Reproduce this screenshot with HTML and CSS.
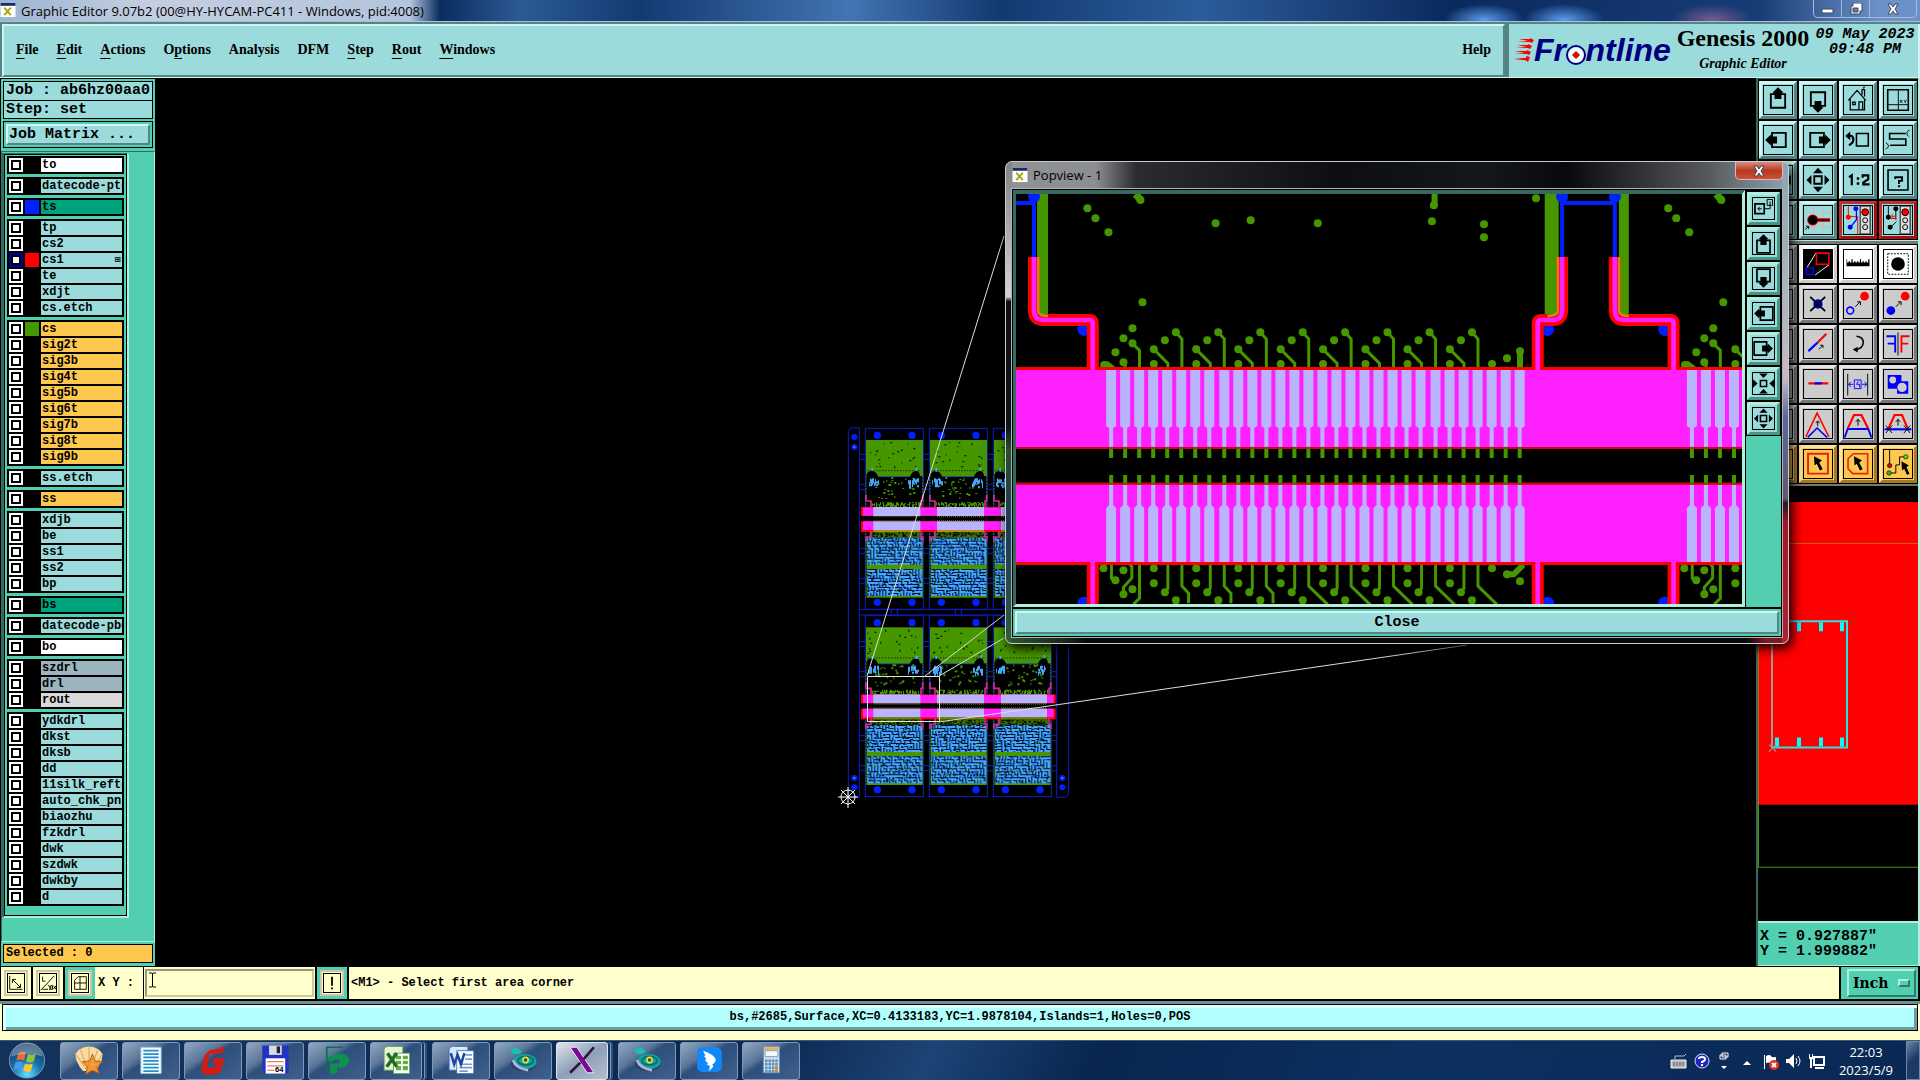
FILE: index.html
```
<!DOCTYPE html>
<html lang="en">
<head>
    <meta charset="UTF-8">
    <meta name="viewport" content="width=device-width, initial-scale=1.0">
    <title>Graphic Editor 9.07b2</title>
    <link rel="stylesheet" href="styles.css">
</head>
<body>
    <!-- shared icons -->
    <svg class="defs" aria-hidden="true">
        <symbol id="pan" viewBox="0 0 90 90">
            <path d="M36 26H22V70H68V26H54" fill="none" stroke="#000" stroke-width="6"/>
            <path d="M45 4 63 22H56V42H34V22H27Z"/>
        </symbol>
        <symbol id="zoom-out" viewBox="0 0 90 90">
            <path d="M33 33H57V57H33Z" fill="none" stroke="#000" stroke-width="6"/>
            <path d="M45 6 61 23H29ZM45 84 61 67H29ZM8 45 24 29V61ZM82 45 66 29V61Z"/>
        </symbol>
        <symbol id="zoom-in" viewBox="0 0 90 90">
            <path d="M33 33H57V57H33Z" fill="none" stroke="#000" stroke-width="6"/>
            <path d="M45 24 62 6H28ZM45 66 62 84H28ZM22 45 4 28V62ZM68 45 86 28V62Z"/>
        </symbol>
        <symbol id="x-app" viewBox="0 0 16 16">
            <path fill="#fff" d="M0 0h16v15H0z"/>
            <path fill="#1c2a70" d="M0 0h16v3H0z"/>
            <path fill="none" stroke="#a8a800" stroke-width="2" d="M4 5l7 8M11 5l-7 8"/>
        </symbol>
        <symbol id="genesis" viewBox="0 0 40 40">
            <ellipse cx="21" cy="24" rx="15" ry="9" fill="#2c3c66"/>
            <ellipse cx="22" cy="22" rx="14" ry="9" fill="#12a39a"/>
            <path d="M8 20q4 10 18 12" fill="none" stroke="#b9b2d8" stroke-width="3"/>
            <ellipse cx="23" cy="21" rx="9" ry="5" fill="none" stroke="#0a6a6c" stroke-width="2"/>
            <circle cx="23" cy="20" r="4" fill="#e6dc3c"/>
            <circle cx="23" cy="20" r="2" fill="#14524e"/>
            <path d="M5 9q2-4 8-3l6 4-4 3H8z" fill="#16c0b4"/>
        </symbol>
    </svg>

    <header class="titlebar">
        <svg class="app-icon"><use href="#x-app"/></svg>
        <span class="titlebar-text">Graphic Editor 9.07b2 (00@HY-HYCAM-PC411 - Windows, pid:4008)</span>
        <div class="window-buttons">
            <button aria-label="Minimize"><svg viewBox="0 0 14 12"><path d="M1 6h11v4H1z"/></svg></button>
            <button aria-label="Restore"><svg viewBox="0 0 14 12"><path fill-rule="evenodd" d="M4 0h9v8h-2v3H2V3h2zM4 5v4h5V5z"/></svg></button>
            <button aria-label="Close window" class="wide"><svg viewBox="0 0 14 12"><path d="M2 1h3l2 3 2-3h3L9 6l3 5H9L7 8l-2 3H2l3-5z"/></svg></button>
        </div>
    </header>

    <div class="topbar">
        <nav class="menubar">
            <a href="#"><u>F</u>ile</a>
            <a href="#"><u>E</u>dit</a>
            <a href="#"><u>A</u>ctions</a>
            <a href="#">O<u>p</u>tions</a>
            <a href="#">Analysis</a>
            <a href="#">DFM</a>
            <a href="#"><u>S</u>tep</a>
            <a href="#"><u>R</u>out</a>
            <a href="#"><u>W</u>indows</a>
            <a href="#" class="help">Help</a>
        </nav>
        <div class="brand">
            <div class="logo">
                <svg class="flames" viewBox="0 0 20 24"><path fill="#f00" d="M5 1h11V0l4 2-2 3-2-1H3l11-1zM3 7h11V6l4 2-2 3-2-1H1l12-1zM1 13h12v-1l4 2-2 3-2-1H0l11-1zM0 20h12v-2l4 1-2 5-3-2H0l9-1z"/></svg>
                <span class="logo-text">Fr<span class="logo-o">o<svg viewBox="0 0 20 26"><circle cx="10" cy="13" r="9" fill="#e8ffff" stroke="#000080" stroke-width="2"/><path fill="#e00" d="M10 9l4 4-4 4-4-4z"/></svg></span>ntline</span>
            </div>
            <div class="product">
                <div class="product-name">Genesis 2000</div>
                <div class="product-sub">Graphic Editor</div>
            </div>
            <div class="datetime"><div>09 May 2023</div><div>09:48 PM</div></div>
        </div>
    </div>

    <main class="workspace">
        <aside class="sidebar">
            <div class="job-info">
                <div class="job-line">Job : ab6hz00aa0</div>
                <div class="job-line">Step: set</div>
            </div>
            <div class="matrix-box"><button class="matrix">Job Matrix ...</button></div>
            <div class="layer-scroll">
                <div class="layers" id="layers"></div>
            </div>
            <div class="selected-box"><div class="selected">Selected : 0</div></div>
        </aside>

        <section class="canvas">
            <svg id="board" viewBox="155 78 1601 888" preserveAspectRatio="xMinYMin meet"></svg>
        </section>

        <aside class="right">
            <div class="tools">
                <button class="tool" aria-label="Pan up"><svg viewBox="0 0 90 90"><use href="#pan"/></svg></button>
                <button class="tool" aria-label="Pan down"><svg viewBox="0 0 90 90"><use href="#pan" transform="rotate(180 45 45)"/></svg></button>
                <button class="tool" aria-label="Home"><svg viewBox="0 0 90 90"><path d="M14 46 42 14 70 46M20 42V77H66V42M48 77V51H60V77M28 52H36V60H28ZM58 28V12H66V34M62 8l4-6" fill="none" stroke="#000" stroke-width="4"/></svg></button>
                <button class="tool" aria-label="XY window"><svg viewBox="0 0 90 90"><path d="M12 12H78V78H12Z" fill="none" stroke="#000" stroke-width="5"/><path d="M46 12V78M12 60H78M51 45l8 9M59 45l-8 9M64 45l4 5 5-5M68 50v5" fill="none" stroke="#000" stroke-width="3"/></svg></button>

                <button class="tool" aria-label="Pan left"><svg viewBox="0 0 90 90"><use href="#pan" transform="rotate(-90 45 45)"/></svg></button>
                <button class="tool" aria-label="Pan right"><svg viewBox="0 0 90 90"><use href="#pan" transform="rotate(90 45 45)"/></svg></button>
                <button class="tool" aria-label="Previous view"><svg viewBox="0 0 90 90"><path d="M40 24H78V64H40Z" fill="none" stroke="#000" stroke-width="5"/><path d="M14 32H24Q30 34 30 44T16 62" fill="none" stroke="#000" stroke-width="7"/><path d="M4 32 20 18V46Z"/></svg></button>
                <button class="tool" aria-label="Serpentine"><svg viewBox="0 0 90 90"><path d="M70 24H18V42H70V62H20" fill="none" stroke="#000" stroke-width="5"/><path d="M82 12l-8 8v8l6 6M6 54l8 7v6l-8 8" fill="none" stroke="#000" stroke-width="3"/></svg></button>

                <button class="tool" aria-label="Zoom in"><svg viewBox="0 0 90 90"><use href="#zoom-in"/></svg></button>
                <button class="tool" aria-label="Zoom out"><svg viewBox="0 0 90 90"><use href="#zoom-out"/></svg></button>
                <button class="tool" aria-label="Scale 1:2"><svg viewBox="0 0 90 90"><path d="M16 36l9-6V62M60 38V30H78V42L62 53V59H82" fill="none" stroke="#000" stroke-width="7"/><path d="M41 36h8v8h-8zM41 52h8v8h-8z"/></svg></button>
                <button class="tool" aria-label="Query"><svg viewBox="0 0 90 90"><path d="M13 13H77V77H13Z" fill="none" stroke="#000" stroke-width="5"/><path d="M36 42V36H58V48H48V58" fill="none" stroke="#000" stroke-width="6"/><path d="M45 62h7v6h-7z"/></svg></button>

                <button class="tool" aria-label="Measure"><svg viewBox="0 0 90 90"><path d="M15 20H70V70" fill="none" stroke="#000" stroke-width="3"/></svg></button>
                <button class="tool" aria-label="Snap"><svg viewBox="0 0 90 90"><path d="M32 0V90M62 0V90M0 22H90M0 68H90" stroke="#e6a8a0" stroke-width="2"/><path d="M28 45H84" stroke="#f00" stroke-width="12"/><circle cx="28" cy="45" r="18" fill="#f00"/><circle cx="28" cy="45" r="15"/><path d="M28 45H82" stroke="#000" stroke-width="5"/><path d="M4 76 14 66M6 65h9v9" fill="none" stroke="#000" stroke-width="3"/></svg></button>
                <button class="tool alert" aria-label="Net check"><svg viewBox="0 0 90 90"><path d="M14 0V34H44V90" fill="none" stroke="#f00" stroke-width="3"/><path d="M40 8V44L22 66" fill="none" stroke="#00f" stroke-width="4"/><circle cx="14" cy="36" r="8" fill="#f00"/><circle cx="38" cy="9" r="8" fill="#00f"/><circle cx="20" cy="68" r="8" fill="#00f"/><path d="M52 0V90H84V0Z" fill="#ddd" stroke="#000" stroke-width="3"/><circle cx="68" cy="20" r="11" fill="#f00" stroke="#000" stroke-width="3"/><circle cx="68" cy="46" r="8" fill="none" stroke="#000" stroke-width="3"/><circle cx="68" cy="68" r="8" fill="none" stroke="#000" stroke-width="3"/></svg></button>
                <button class="tool alert" aria-label="Spacing check"><svg viewBox="0 0 90 90"><path d="M14 0V36M38 8V44M22 68L40 50" fill="none" stroke="#000" stroke-width="3"/><path d="M26 26V40H38M26 33H38M20 40H40" fill="none" stroke="#f00" stroke-width="3"/><circle cx="14" cy="36" r="8"/><circle cx="38" cy="9" r="8"/><circle cx="20" cy="68" r="8"/><path d="M52 0V90H84V0Z" fill="#ddd" stroke="#000" stroke-width="3"/><circle cx="68" cy="20" r="11" fill="#f00" stroke="#000" stroke-width="3"/><circle cx="68" cy="46" r="8" fill="none" stroke="#000" stroke-width="3"/><circle cx="68" cy="68" r="8" fill="none" stroke="#000" stroke-width="3"/></svg></button>
            </div>

            <div class="tools edit">
                <button class="tool grey" aria-label="Select"><svg viewBox="0 0 90 90"></svg></button>
                <button class="tool white" aria-label="Popview"><svg viewBox="0 0 90 90"><path d="M0 0H90V90H0Z"/><path d="M10 56 38 10M36 80 80 48" stroke="#fff" stroke-width="3"/><path d="M40 10H80V46H40Z" fill="none" stroke="#f00" stroke-width="5"/><path d="M8 58H30V78H8Z" fill="none" stroke="#00f" stroke-width="5"/></svg></button>
                <button class="tool white" aria-label="Ruler"><svg viewBox="0 0 90 90"><path d="M8 30V52H82V30h-4v10h-5V36h-4v4h-5V36h-4v4h-5V30h-4v10h-5V36h-4v4h-5V36h-4v4h-5V30h-4v10h-5V36h-4v4h-5V30z"/></svg></button>
                <button class="tool white" aria-label="Flash"><svg viewBox="0 0 90 90"><path d="M12 12H78V78H12Z" fill="none" stroke="#000" stroke-width="3" stroke-dasharray="6 4"/><circle cx="45" cy="45" r="22"/></svg></button>

                <button class="tool grey" aria-label="Add"><svg viewBox="0 0 90 90"></svg></button>
                <button class="tool grey" aria-label="Delete"><svg viewBox="0 0 90 90"><circle cx="45" cy="45" r="15" fill="#0000c8"/><path d="M20 22 68 68M68 22 20 68" stroke="#000" stroke-width="6"/></svg></button>
                <button class="tool grey" aria-label="Copy pad"><svg viewBox="0 0 90 90"><circle cx="66" cy="20" r="14" fill="#f00"/><circle cx="20" cy="66" r="11" fill="none" stroke="#00f" stroke-width="5"/><path d="M36 54 52 38M42 38H53V49" fill="none" stroke="#000" stroke-width="3"/></svg></button>
                <button class="tool grey" aria-label="Move pad"><svg viewBox="0 0 90 90"><circle cx="68" cy="20" r="14" fill="#f00"/><circle cx="22" cy="66" r="14" fill="#00f"/><path d="M38 54 54 38M44 38H55V49" fill="none" stroke="#000" stroke-width="3"/></svg></button>

                <button class="tool grey" aria-label="Line"><svg viewBox="0 0 90 90"></svg></button>
                <button class="tool grey" aria-label="Stretch line"><svg viewBox="0 0 90 90"><path d="M44 40 72 12" stroke="#f00" stroke-width="7"/><path d="M14 68 44 40" stroke="#00f" stroke-width="7"/><path d="M48 62 60 50M52 49H61V58" fill="none" stroke="#000" stroke-width="3"/></svg></button>
                <button class="tool grey" aria-label="Rotate"><svg viewBox="0 0 90 90"><path d="M40 20Q62 22 62 40T36 64" fill="none" stroke="#000" stroke-width="5"/><path d="M28 63 44 54V72Z"/></svg></button>
                <button class="tool grey" aria-label="Mirror"><svg viewBox="0 0 90 90"><path d="M45 8V82" stroke="#000" stroke-width="3"/><path d="M8 20H36V72M12 44H36" fill="none" stroke="#00f" stroke-width="6"/><path d="M82 20H56V72M56 44H78" fill="none" stroke="#f00" stroke-width="6"/></svg></button>

                <button class="tool grey" aria-label="Arc"><svg viewBox="0 0 90 90"></svg></button>
                <button class="tool grey" aria-label="Break line"><svg viewBox="0 0 90 90"><path d="M14 43H78" stroke="#f00" stroke-width="7"/><path d="M34 43H58" stroke="#00f" stroke-width="7"/></svg></button>
                <button class="tool grey" aria-label="Spacing"><svg viewBox="0 0 90 90"><path d="M12 12V82M76 12V82" stroke="#000" stroke-width="3"/><path d="M14 46H30M58 46H74M22 38l-7 8 7 8M66 38l7 8-7 8M33 32H55V60H33ZM46 36l-6 10H50V56" fill="none" stroke="#00f" stroke-width="3"/></svg></button>
                <button class="tool grey" aria-label="Contour"><svg viewBox="0 0 90 90"><path d="M12 16H56V36H78V76H42V60H12Z" fill="#00f"/><circle cx="28" cy="32" r="11" fill="#ccc"/><circle cx="58" cy="56" r="15" fill="#ccc"/></svg></button>

                <button class="tool grey" aria-label="Corner"><svg viewBox="0 0 90 90"></svg></button>
                <button class="tool grey" aria-label="Move corner"><svg viewBox="0 0 90 90"><path d="M6 86 42 10 80 86" fill="none" stroke="#f00" stroke-width="5"/><path d="M12 88 42 58 74 88" fill="none" stroke="#00f" stroke-width="5"/><path d="M44 52V36M38 42l6-7 6 7" fill="none" stroke="#000" stroke-width="3"/></svg></button>
                <button class="tool grey" aria-label="Move segment"><svg viewBox="0 0 90 90"><path d="M12 60 32 16H56L78 60" fill="none" stroke="#f00" stroke-width="7"/><path d="M2 88 12 61H78L88 88" fill="none" stroke="#00f" stroke-width="6"/><path d="M45 50V30M38 38l7-8 7 8" fill="none" stroke="#000" stroke-width="3"/></svg></button>
                <button class="tool grey" aria-label="Slide segment"><svg viewBox="0 0 90 90"><path d="M14 60 34 16H58L76 60" fill="none" stroke="#f00" stroke-width="7"/><path d="M2 62H88" stroke="#00f" stroke-width="7"/><path d="M45 50V30M38 38l7-8 7 8M6 50 26 74M26 50 6 74M64 50 84 74M84 50 64 74" fill="none" stroke="#000" stroke-width="3"/></svg></button>

                <button class="tool gold" aria-label="Select one"><svg viewBox="0 0 90 90"></svg></button>
                <button class="tool gold" aria-label="Select rectangle"><svg viewBox="0 0 90 90"><path d="M13 12H77V76H13Z" fill="none" stroke="#e82010" stroke-width="6"/><path d="M32 20 58 34 49 40 60 62 51 66 41 44 34 50Z"/></svg></button>
                <button class="tool gold" aria-label="Select polygon"><svg viewBox="0 0 90 90"><path d="M30 12H76V76H28L13 60V28Z" fill="none" stroke="#e82010" stroke-width="5"/><path d="M32 20 58 34 49 40 60 62 51 66 41 44 34 50Z"/></svg></button>
                <button class="tool gold" aria-label="Select net"><svg viewBox="0 0 90 90"><path d="M18 0V50M18 74H38V48H50V22H70" fill="none" stroke="#000" stroke-width="3"/><circle cx="18" cy="50" r="7" fill="#c01010" stroke="#000" stroke-width="2"/><circle cx="16" cy="74" r="7" fill="#20c020" stroke="#000" stroke-width="2"/><circle cx="70" cy="22" r="7" fill="#50e020" stroke="#000" stroke-width="2"/><path d="M56 36 80 50 72 55 82 76 74 80 65 60 58 66Z"/></svg></button>
            </div>

            <div class="overview">
                <svg viewBox="1758 502 160 418" preserveAspectRatio="none">
                    <path fill="#f00" d="M1758 502h160v302h-160z"/>
                    <path stroke="#c86410" d="M1758 543.5h160M1758.5 543v261" fill="none"/>
                    <path stroke="#469600" d="M1758.5 804v62.500h160" fill="none"/>
                    <path stroke="#9a9a9a" stroke-width="2" d="M1772 621v126"/>
                    <path stroke="#2ce0e4" stroke-width="2" fill="none" d="M1773 621h74v126h-74"/>
                    <path stroke="#0ff" stroke-width="4" d="M1777 622v9M1799 622v9M1821 622v9M1842 622v9M1777 737v9M1799 737v9M1821 737v9M1842 737v9"/>
                    <path stroke="#9a9a9a" d="M1769 744l7 7M1776 744l-7 7"/>
                </svg>
            </div>
            <div class="coords"><div>X = 0.927887"</div><div>Y = 1.999882"</div></div>
        </aside>
    </main>

    <div class="command">
        <button class="cmd" aria-label="Absolute mode"><svg viewBox="0 0 20 20"><path d="M3 2v15h14M6 6l9 9M6 10V6h4M15 11v4h-4"/></svg></button>
        <button class="cmd" aria-label="Angle mode"><svg viewBox="0 0 20 20"><path d="M2 18 17 2M4 3v5h3M4 17h6M10 12q3 2 2 6M13 13v4h2v-4zM16 13l3 4M19 13l-3 4"/></svg></button>
        <button class="cmd on" aria-label="Grid"><svg viewBox="0 0 20 20"><path d="M4 17V7l4-4h9v14zM10 3v14M4 10h13"/></svg></button>
        <label class="xy" for="xy">X Y :</label>
        <div class="xy-field">
            <input type="text" id="xy">
            <svg class="ibeam" viewBox="0 0 7 16"><path d="M0 1h3M4 1h3M3.500 1v14M0 15h3M4 15h3" stroke="#000"/></svg>
        </div>
        <button class="cmd on" aria-label="Interrupt"><svg viewBox="0 0 20 20"><path d="M10 3v10M10 15v2" stroke-width="2"/></svg></button>
        <div class="prompt">&lt;M1&gt; - Select first area corner</div>
        <div class="units">
            <select aria-label="Units"><option>Inch</option><option>MM</option></select>
            <span class="units-mark"></span>
        </div>
    </div>

    <div class="status"><div class="status-text">bs,#2685,Surface,XC=0.4133183,YC=1.9878104,Islands=1,Holes=0,POS</div></div>

    <footer class="taskbar">
        <button class="start" aria-label="Start">
            <svg viewBox="0 0 40 40">
                <defs><radialGradient id="orb" cx=".5" cy=".9" r=".9"><stop offset="0" stop-color="#5fe4ff"/><stop offset=".45" stop-color="#1a72b4"/><stop offset="1" stop-color="#17304e"/></radialGradient></defs>
                <circle cx="20" cy="20" r="18" fill="url(#orb)" stroke="#7d9cba"/>
                <path fill="#f2682c" d="M11 13q4-3 8-1l-2 8q-4-2-8 0z"/><path fill="#8cc63e" d="M21 13q4 2 8 0l-2 8q-4 2-8 0z"/>
                <path fill="#3c9ee8" d="M8 22q4-2 8 0l-2 8q-3-2-8 0z"/><path fill="#fbc834" d="M18 23q4 2 8 0l-2 8q-4 2-8-1z"/>
                <path fill="#fff" opacity=".3" d="M4 16a16 14 0 0 1 32 0q-16-6-32 0z"/>
            </svg>
        </button>
        <button class="task" aria-label="Shell"><svg viewBox="0 0 40 40"><path fill="#f8dca4" d="M13 33 9 28 5 20l-1-7 4-5 6-3 6-1 6 1 6 3 4 5-1 7-4 8-4 5z"/><path stroke="#d39a3e" fill="none" d="M18 33 5 14M19 33 10 8M20 33V5M22 33l8-25M24 33l11-19"/><path fill="#f09030" stroke="#b35a10" d="M24 13l3 8 9 1-7 6 3 8-8-4-8 5 2-9-6-6 9-1z"/><path fill="none" stroke="#ffd080" stroke-dasharray="1 2" d="M24 17v14M18 25h13M20 32l4-7 5 6"/></svg></button>
        <button class="task" aria-label="Notes"><svg viewBox="0 0 40 40"><path fill="#f4fbff" stroke="#8cb8d8" d="M8 5h24v31H8z"/><path stroke="#2590c8" stroke-width="2" d="M11 9h18M11 13h18M11 17h18M11 21h18M11 25h18M11 29h18M11 33h18"/></svg></button>
        <button class="task" aria-label="G tool"><svg viewBox="0 0 40 40"><path fill="#d41c12" d="M34 3 31 12 16 13 13 29h9l2-5h-5l2-6h12l-3 14-6 5H9l-3-5 4-18 7-6 10-1z"/></svg></button>
        <button class="task" aria-label="Save 64"><svg viewBox="0 0 40 40"><path fill="#2334c4" d="M5 3h31v33H8l-3-3z"/><path fill="#d8dce4" d="M13 3h15v11H13z"/><path fill="#223" d="M22 4h4v8h-4z"/><path fill="#fff" d="M9 18h23v18H9z"/><path stroke="#d43a3a" d="M11 22h19M11 27h19M11 32h8"/><text x="20" y="34" class="disk">64</text></svg></button>
        <button class="task" aria-label="P tool"><svg viewBox="0 0 40 40"><path fill="#0d9050" d="M11 16q12-6 20-2 7 7-1 14-5 3-10 0v8h-8V24h9q4-1 2-4-5-2-12 4z"/><path fill="none" stroke="#0d7050" stroke-width="2" d="M8 35V5h19"/></svg></button>
        <button class="task stacked" aria-label="Spreadsheet"><svg viewBox="0 0 40 40"><path fill="#e4f4d4" stroke="#58a040" d="M6 7q2-4 8-3h14v28H6z"/><path fill="#fff" stroke="#58a040" d="M17 12h19v24H17z"/><path fill="#66aa4a" d="M20 15h6v4h-6zM28 15h6v4h-6zM20 21h6v4h-6zM28 21h6v4h-6zM20 27h6v5h-6zM28 27h6v5h-6z"/><path stroke="#1e6c20" stroke-width="4" d="M10 12 21 28M21 12 9 28"/></svg></button>
        <button class="task" aria-label="Document"><svg viewBox="0 0 40 40"><path fill="#dbe8f8" stroke="#3c6cb8" d="M6 7q2-4 8-3h14v28H6z"/><path fill="#fff" stroke="#3c6cb8" d="M15 9h20v27H15z"/><path stroke="#7a9cd0" stroke-width="2" d="M25 14h8M25 19h8M18 25h15M18 29h15M18 33h10"/><path fill="none" stroke="#1c489c" stroke-width="3" d="M8 12l4 13 4-11 4 11 4-13"/></svg></button>
        <button class="task" aria-label="Genesis"><svg><use href="#genesis"/></svg></button>
        <button class="task active stacked" aria-label="X server"><svg viewBox="0 0 40 40"><path fill="#7a0a90" stroke="#fff" d="M6 5h8l20 30h-8z"/><path stroke="#301040" stroke-width="3" d="M34 5 22 19M18 23 6 35"/></svg></button>
        <button class="task" aria-label="Genesis 2"><svg><use href="#genesis"/></svg></button>
        <button class="task" aria-label="Messenger"><svg viewBox="0 0 40 40"><rect x="6" y="5" width="29" height="29" rx="6" fill="#1088fa"/><path fill="#fff" d="M13 9q12 4 15 10-1 5-4 6l1 3-5 5 1-6-4-2 2-1-4-4 2-1-3-4h2z"/></svg></button>
        <button class="task" aria-label="Calculator"><svg viewBox="0 0 40 40"><path fill="#c8e2f4" stroke="#5a94c0" d="M11 4h19v31H11z"/><path fill="#f0b040" d="M12 5h17v3H12z"/><path fill="#eef8ff" stroke="#88a" d="M13 9h15v7H13z"/><path stroke="#5e8cb4" stroke-width="3" stroke-dasharray="3 1" d="M13 21h15M13 25h15M13 29h15M13 33h15"/><path fill="#e08a20" d="M25 27h3v7h-3z"/></svg></button>

        <div class="tray">
            <svg viewBox="0 0 18 18"><path fill="#bbb" stroke="#eee" d="M1 8h15v8H1z"/><path stroke="#555" stroke-dasharray="2 1" d="M3 11h12M3 13h12"/><path fill="none" stroke="#bbb" d="M5 7V4h9l2-2"/></svg>
            <svg viewBox="0 0 18 18"><circle cx="9" cy="9" r="7" fill="#1c28b8" stroke="#dde"/><path fill="none" stroke="#fff" stroke-width="2" d="M6 7q0-2 3-2t3 2-3 3v1M9 12v2"/></svg>
            <svg viewBox="0 0 18 18"><path fill="none" stroke="#fff" d="M6 1h6v4H6zM4 3h6v4H4z"/><path fill="#fff" d="M5 14h6l-3 3z"/></svg>
            <svg viewBox="0 0 18 18"><path fill="#fff" d="M4 13h8l-4-4z"/></svg>
            <svg viewBox="0 0 18 18"><path fill="#fff" d="M2 3h1v14H2zM4 4q4-2 5 0t5 1v6q-4 1-5 0t-5 0z"/><circle cx="12" cy="13" r="5" fill="#e03020"/><path stroke="#fff" stroke-width="2" d="M10 11l4 4M14 11l-4 4"/></svg>
            <svg viewBox="0 0 18 18"><path fill="#fff" d="M1 7h3l5-5v14l-5-5H1z"/><path fill="none" stroke="#fff" d="M11 6q2 3 0 6M13 4q4 5 0 10"/></svg>
            <svg viewBox="0 0 18 18"><path fill="none" stroke="#fff" stroke-width="2" d="M6 5h10v8H6z"/><path fill="#fff" d="M7 15h9v2H7zM1 2h1v3h2V2h1v5H4v9H2V7H1z"/></svg>
        </div>
        <div class="clock"><div>22:03</div><div>2023/5/9</div></div>
        <button class="show-desktop" aria-label="Show desktop"></button>
    </footer>

    <section class="popview">
        <div class="pop-title">
            <svg class="app-icon"><use href="#x-app"/></svg>
            <span>Popview - 1</span>
            <button class="pop-x" aria-label="Close popview"><svg viewBox="0 0 14 12"><path d="M2 1h3l2 3 2-3h3L9 6l3 5H9L7 8l-2 3H2l3-5z"/></svg></button>
        </div>
        <div class="pop-body">
            <div class="pop-main">
                <div class="pop-canvas"><svg id="popCanvas" viewBox="48 132 2175 1230" preserveAspectRatio="none"></svg></div>
                <div class="pop-tools">
                    <button aria-label="Set area"><svg viewBox="2 2 86 86"><path d="M10 26H48V66H10Z" fill="none" stroke="#000" stroke-width="7"/><path d="M60 8H82V32H60ZM50 46H72V16M38 46H22M30 38l-8 8 8 8" fill="none" stroke="#000" stroke-width="4"/></svg></button>
                    <button aria-label="Pan up"><svg viewBox="8 0 74 74"><use href="#pan" width="90" height="90"/></svg></button>
                    <button aria-label="Pan down"><svg viewBox="8 16 74 74"><use href="#pan" width="90" height="90" transform="rotate(180 45 45)"/></svg></button>
                    <button aria-label="Pan left"><svg viewBox="0 8 74 74"><use href="#pan" width="90" height="90" transform="rotate(-90 45 45)"/></svg></button>
                    <button aria-label="Pan right"><svg viewBox="16 8 74 74"><use href="#pan" width="90" height="90" transform="rotate(90 45 45)"/></svg></button>
                    <button aria-label="Zoom in"><svg viewBox="4 4 82 82"><use href="#zoom-in" width="90" height="90"/></svg></button>
                    <button aria-label="Zoom out"><svg viewBox="4 4 82 82"><use href="#zoom-out" width="90" height="90"/></svg></button>
                </div>
            </div>
            <div class="pop-footer"><button>Close</button></div>
        </div>
    </section>

    <script src="script.js"></script>
</body>
</html>
```
FILE: styles.css
```
:root {
    --aqua: #9bdbdb;
    --aqua-light: #cdf6f4;
    --aqua-dark: #568384;
    --teal: #52ceb0;
    --teal-light: #b0efdd;
    --teal-dark: #36695f;
    --cream: #ffffcc;
    --gold: #fec84f;
    --mono: "Liberation Mono", monospace;
    --serif: "Liberation Serif", serif;
    --ui: "Open Sans", sans-serif;
}

* {
    box-sizing: border-box;
}

body {
    margin: 0;
    height: 100vh;
    display: flex;
    flex-direction: column;
    overflow: hidden;
    background: #000;
    color: #000;
    font-family: var(--mono);
}

button,
input,
select {
    margin: 0;
    padding: 0;
    border: 0;
    border-radius: 0;
    font: inherit;
    color: inherit;
    background: none;
}

svg {
    display: block;
}

.defs {
    position: absolute;
    width: 0;
    height: 0;
}

/* title bar */
.titlebar {
    flex: none;
    height: 22px;
    display: flex;
    align-items: center;
    font-family: var(--ui);
    font-size: 13px;
    border-bottom: 1px solid #a9c0dc;
    background:
        radial-gradient(40px 16px at 1484px 20px, #5a9cf0, transparent),
        radial-gradient(40px 16px at 1564px 20px, #5a9cf0, transparent),
        radial-gradient(40px 16px at 1712px 20px, #7a5a90, transparent),
        linear-gradient(90deg, #9db4d0 0, #c3cfe0 150px, #b4c4dc 410px, #0a2c60 440px, #2c5a94 520px, #123a72 640px, #4474b4 850px, #123a72 1000px, #2c5c9c 1200px, #0a2a5c 1450px, #173c76 1760px, #6c90c8 1880px);
}

.app-icon {
    width: 16px;
    height: 15px;
}

.titlebar-text {
    margin-left: 5px;
    line-height: 18px;
    white-space: nowrap;
}

.window-buttons {
    display: flex;
    align-self: flex-start;
    margin: 0 3px 0 auto;
    height: 18px;
    border: 1px solid #a4bcdc;
    border-top: 0;
    border-radius: 0 0 5px 5px;
}

.window-buttons button {
    width: 28px;
    display: flex;
    align-items: center;
    justify-content: center;
    border-right: 1px solid #a4bcdc;
}

.window-buttons .wide {
    width: 46px;
    border: 0;
}

.window-buttons svg,
.pop-x svg {
    width: 14px;
    height: 12px;
    fill: #fff;
    stroke: #445;
    stroke-width: 1px;
}

/* menu and brand */
.topbar {
    flex: none;
    height: 56px;
    display: flex;
    background: var(--aqua-dark);
    border-bottom: 1px solid var(--aqua-light);
}

.menubar {
    flex: 1;
    display: flex;
    align-items: center;
    gap: 18px;
    margin: 2px 2px 0;
    padding: 0 12px 2px;
    background: var(--aqua);
    border: 2px solid;
    border-color: var(--aqua-light) var(--aqua-dark) var(--aqua-dark) var(--aqua-light);
    font-family: var(--serif);
    font-size: 14px;
    font-weight: bold;
}

.menubar a {
    color: #000;
    text-decoration: none;
}

.menubar u {
    text-underline-offset: 4px;
}

.menubar .help {
    margin-left: auto;
}

.brand {
    width: 413px;
    display: flex;
    margin-top: 2px;
    background: var(--aqua);
    border-left: 2px solid var(--aqua-dark);
    border-right: 2px solid var(--aqua-light);
    white-space: nowrap;
}

.logo {
    display: flex;
    align-items: center;
    width: 165px;
    padding: 0 0 2px 5px;
}

.flames {
    width: 20px;
    height: 24px;
}

.logo-text {
    font: italic bold 32px/40px "Liberation Sans", sans-serif;
    color: #000080;
}

.logo-o {
    position: relative;
    color: transparent;
}

.logo-o svg {
    position: absolute;
    left: 0;
    bottom: 0;
    width: 20px;
    height: 26px;
}

.product {
    width: 138px;
    font-family: var(--serif);
    font-weight: bold;
    text-align: center;
}

.product-name {
    font-size: 24px;
    line-height: 28px;
}

.product-sub {
    font-size: 14px;
    line-height: 24px;
    font-style: italic;
}

.datetime {
    flex: 1;
    padding-top: 3px;
    font-size: 15px;
    line-height: 15px;
    font-weight: bold;
    font-style: italic;
    text-align: center;
}

/* workspace */
.workspace {
    flex: 1;
    min-height: 0;
    display: grid;
    grid-template-columns: 155px 1fr 164px;
    border-bottom: 1px solid #000;
}

.sidebar {
    display: flex;
    flex-direction: column;
    min-height: 0;
    margin-top: 1px;
    background: var(--teal);
    border-left: 1px solid #000;
    overflow: hidden;
}

.job-info,
.matrix-box,
.selected-box {
    margin: 2px 2px 0;
    border: 1px solid #000;
    font-size: 15px;
    white-space: nowrap;
}

.job-info {
    font-weight: bold;
}

.job-line {
    height: 18px;
    line-height: 18px;
    padding-left: 2px;
    background: var(--aqua);
}

.job-line + .job-line {
    border-top: 1px solid #000;
}

.matrix-box {
    padding: 2px;
}

.matrix {
    display: block;
    width: 100%;
    height: 21px;
    padding-left: 1px;
    text-align: left;
    font-weight: bold;
    line-height: 18px;
    background: var(--aqua);
    border: 2px solid;
    border-color: var(--aqua-light) var(--aqua-dark) var(--aqua-dark) var(--aqua-light);
}

.layer-scroll {
    flex: 1;
    margin-top: 3px;
    padding: 2px 27px 0 2px;
    border: 1px solid;
    border-color: var(--teal-dark) var(--teal-light) var(--teal-light) var(--teal-dark);
}

.layers {
    display: flex;
    flex-direction: column;
    gap: 3px;
    height: 762px;
    padding: 1px 2px;
    border: 1px solid #000;
    box-shadow: 1px 1px 0 1px var(--teal-light), -1px 0 0 1px var(--teal-dark);
}

.layer-group {
    display: flex;
    flex-direction: column;
    gap: 2px;
    padding: 2px;
    background: #000;
}

.layer {
    display: grid;
    grid-template-columns: 14px 14px minmax(0, 1fr);
    gap: 2px;
    height: 14px;
}

.layer input {
    appearance: none;
    width: 14px;
    height: 14px;
    background: #fff;
    border: 2px solid #fff;
    box-shadow: inset 0 0 0 2px #000;
}

.layer input:checked {
    border-color: #0000a0;
}

.layer-name {
    display: flex;
    justify-content: space-between;
    padding-left: 1px;
    overflow: hidden;
    background: var(--aqua);
    font-size: 12px;
    font-weight: bold;
    line-height: 15px;
    white-space: nowrap;
}

.layer-name small {
    padding-right: 1px;
    font: bold 8px/14px "DejaVu Sans", sans-serif;
}

.blue { background: #0020ff; }
.red { background: #f00; }
.green { background: #469600; }

.silk { background: #fff; }
.mask { background: #00a47c; }
.signal { background: var(--gold); }
.drill { background: #9bb4be; }
.rout { background: #d9d9d9; }

.selected-box {
    margin-bottom: 3px;
}

.selected {
    height: 17px;
    padding-left: 2px;
    background: var(--gold);
    font-size: 12px;
    font-weight: bold;
    line-height: 17px;
}

.canvas {
    min-width: 0;
    min-height: 0;
}

.canvas svg {
    width: 100%;
    height: 100%;
}

/* right column */
.right {
    display: flex;
    flex-direction: column;
    min-height: 0;
    border-left: 2px solid var(--teal-dark);
    border-right: 2px solid var(--teal-light);
}

.tools {
    display: grid;
    grid-template-columns: repeat(4, 38px);
    gap: 2px;
    padding: 2px 0 1px 1px;
    background: #000;
    border-top: 1px solid var(--teal-dark);
    border-bottom: 1px solid var(--teal-light);
}

.tools.edit {
    padding-top: 1px;
    border-top: 3px solid #777;
    border-bottom: 2px solid #777;
    margin-bottom: 16px;
}

.tool {
    width: 38px;
    height: 38px;
    border: 3px solid;
    border-color: var(--aqua-light) var(--aqua-dark) var(--aqua-dark) var(--aqua-light);
    padding: 1px;
    background: var(--aqua);
}

.tool svg {
    width: 30px;
    height: 30px;
    border: 1px solid #000;
}

.tool.alert {
    border-color: #c03030 #a01010 #a01010 #c03030;
}

.tool.grey {
    background: #ccc;
    border-color: #e6e6e6 #777 #777 #e6e6e6;
}

.tool.white {
    background: #fff;
    border-color: #fff #ccc #ccc #fff;
}

.tool.gold {
    background: var(--gold);
    border-color: #ffe39a #a47a22 #a47a22 #ffe39a;
}

.overview {
    flex: 1;
    min-height: 0;
}

.overview svg {
    width: 100%;
    height: 100%;
}

.coords {
    height: 45px;
    padding: 6px 0 0 2px;
    background: var(--teal);
    border-top: 2px solid var(--teal-light);
    border-bottom: 1px solid var(--teal-light);
    font-size: 15px;
    font-weight: bold;
    line-height: 15px;
}

/* command line */
.command {
    flex: none;
    height: 34px;
    display: flex;
    gap: 2px;
    padding: 0 2px 1px 1px;
    border-bottom: 1px solid #000;
    background: #000;
    font-size: 12px;
    font-weight: bold;
}

.cmd {
    width: 30px;
    padding: 3px;
    background: var(--cream);
}

.cmd svg {
    width: 24px;
    height: 26px;
    padding: 1px;
    border: 2px solid #c9c9a4;
    background: var(--cream);
    fill: none;
    stroke: #000;
    outline: 1px solid #000;
    outline-offset: -4px;
}

.cmd.on {
    background: var(--teal);
}

.xy {
    width: 48px;
    margin-left: -2px;
    padding-left: 3px;
    background: var(--cream);
    line-height: 33px;
}

.xy-field {
    position: relative;
    width: 171px;
    padding: 2px 1px;
    margin-left: -1px;
    background: var(--cream);
}

.xy-field input {
    width: 169px;
    height: 28px;
    padding-left: 12px;
    border: 2px solid;
    border-color: #97977a #c9c9a4 #c9c9a4 #97977a;
}

.ibeam {
    position: absolute;
    left: 5px;
    top: 5px;
    width: 7px;
    height: 16px;
}

.prompt {
    flex: 1;
    padding-left: 2px;
    background: var(--cream);
    line-height: 33px;
}

.units {
    position: relative;
    width: 77px;
    padding: 2px 2px 2px 6px;
    background: var(--teal);
}

.units select {
    appearance: none;
    width: 69px;
    height: 28px;
    padding-left: 4px;
    border: 2px solid;
    border-color: var(--teal-light) #2a7c6c #2a7c6c var(--teal-light);
    font-family: "DejaVu Serif", serif;
    font-size: 14px;
    font-weight: bold;
}

.units-mark {
    position: absolute;
    right: 8px;
    top: 12px;
    width: 12px;
    height: 8px;
    border: 2px solid;
    border-color: var(--teal-light) #2a7c6c #2a7c6c var(--teal-light);
    pointer-events: none;
}

.status {
    flex: none;
    height: 39px;
    padding: 3px 2px 9px;
    background: linear-gradient(#6f9090 3px, var(--cream) 3px);
}

.status-text {
    height: 27px;
    border: 1px solid #000;
    background: #b0fffd;
    box-shadow: inset 3px 3px 0 #dcffff, inset -3px -3px 0 #6c9c9c;
    font-size: 12px;
    font-weight: bold;
    line-height: 24px;
    text-align: center;
}

/* taskbar */
.taskbar {
    flex: none;
    height: 40px;
    display: flex;
    align-items: center;
    gap: 4px;
    border-top: 1px solid #3f5878;
    background: linear-gradient(115deg, #14335c 0, #0c2850 700px, #1c4476 850px, #08264f 1000px, #0c3060 1300px, #0a2854);
    color: #fff;
    font-family: var(--ui);
}

.start {
    width: 56px;
    padding: 0 7px;
}

.start svg {
    width: 40px;
    height: 39px;
}

.task {
    width: 58px;
    height: 38px;
    display: flex;
    justify-content: center;
    border: 1px solid #7f98b8;
    border-radius: 3px;
    background: linear-gradient(145deg, #93a9c4 0, #5a7698 35%, #2d4f7c 45%, #40608c 100%);
}

.task svg {
    width: 36px;
    height: 34px;
}

.task.stacked {
    width: 52px;
    margin-right: 6px;
    box-shadow: 2px 0 0 #173456, 3px 0 0 #7f98b8, 5px 0 0 #2d4f7c;
}

.task.active {
    border-color: #dbe4f0;
    background: linear-gradient(145deg, #e0e6ee, #8e9fb8 50%, #b4c0d0);
}

.disk {
    font: bold 9px "Liberation Sans", sans-serif;
}

.tray {
    display: flex;
    gap: 5px;
    margin-left: auto;
}

.tray svg {
    width: 18px;
    height: 18px;
}

.clock {
    width: 72px;
    font-size: 13px;
    line-height: 18px;
    text-align: center;
}

.show-desktop {
    width: 14px;
    height: 39px;
    border: 1px solid #6f88a8;
    background: linear-gradient(135deg, #6c82a0, #1c3a64 50%);
}

/* popview window */
.popview {
    position: absolute;
    left: 1005px;
    top: 161px;
    width: 784px;
    padding: 0 5px 5px;
    border: 1px solid #c8ccd2;
    border-radius: 7px;
    background:
        linear-gradient(#8aa4b4 0, #a8b4bc 25%, #c8b8c4 45%, #5868a0 53%, #605870 70%, #1c1c20 71%, #a01828 75%, #b02034 100%) right / 6px 100% no-repeat,
        linear-gradient(#808284 0, #d0d2d4 28%, #0c0e10 29%, #101418 55%, #28502c 60%, #1c3860 75%, #2c5c38 100%) left / 6px 100% no-repeat,
        linear-gradient(90deg, #28582c 0, #1c2420 60px, #08090b 80px, #08090b 620px, #08090b 740px, #801820 760px) bottom / 100% 6px no-repeat,
        linear-gradient(90deg, #909294 0, #8b8d90 90px, #2a2c2f 130px, #0c0e11 330px, #14171b 480px, #08090b 560px, #555759 700px, #8aa4b4 100%);
    box-shadow: 3px 4px 12px #000;
}

.pop-title {
    display: flex;
    align-items: center;
    height: 26px;
    padding-left: 1px;
    font-family: var(--ui);
    font-size: 13px;
}

.pop-title span {
    margin-left: 5px;
    line-height: 20px;
}

.pop-x {
    align-self: flex-start;
    display: flex;
    align-items: center;
    justify-content: center;
    width: 48px;
    height: 18px;
    margin-left: auto;
    border: 1px solid #eab4a8;
    border-top: 0;
    border-radius: 0 0 5px 5px;
    background: linear-gradient(#d99080, #b83820 50%, #cc5038);
}

.pop-body {
    border: 1px solid #aeb2b4;
    padding: 1px;
    background: #000;
}

.pop-main {
    display: flex;
    gap: 1px;
    margin-bottom: 2px;
}

.pop-canvas {
    flex: 1;
    border-style: solid;
    border-width: 4px 3px 3px;
    border-color: var(--teal-dark) var(--teal-light) var(--teal-light) var(--teal-dark);
    background: #000;
}

.pop-canvas svg {
    width: 100%;
    height: 410px;
}

.pop-tools {
    width: 35px;
    display: flex;
    flex-direction: column;
    align-items: center;
    gap: 2px;
    background: linear-gradient(#000 246px, var(--teal) 246px);
    padding-top: 2px;
}

.pop-tools button {
    width: 33px;
    height: 33px;
    padding: 2px;
    border: 3px solid;
    border-color: var(--teal-light) #459684 #459684 var(--teal-light);
    background: var(--aqua);
}

.pop-tools svg {
    width: 23px;
    height: 23px;
    border: 1px solid #000;
}

.pop-footer {
    padding: 2px;
    background: var(--teal);
}

.pop-footer button {
    display: block;
    width: 100%;
    height: 23px;
    border: 2px solid;
    border-color: var(--aqua-light) var(--aqua-dark) var(--aqua-dark) var(--aqua-light);
    background: var(--aqua);
    font-size: 15px;
    font-weight: bold;
    line-height: 20px;
}
```
FILE: script.js
```
// layer list: [name, type, swatch]
const groups = [
    [['to', 'silk']],
    [['datecode-ptd', '']],
    [['ts', 'mask', 'blue']],
    [['tp', ''], ['cs2', ''], ['cs1', '', 'red'], ['te', ''], ['xdjt', ''], ['cs.etch', '']],
    [['cs', 'signal', 'green'], ['sig2t', 'signal'], ['sig3b', 'signal'], ['sig4t', 'signal'], ['sig5b', 'signal'],
     ['sig6t', 'signal'], ['sig7b', 'signal'], ['sig8t', 'signal'], ['sig9b', 'signal']],
    [['ss.etch', '']],
    [['ss', 'signal']],
    [['xdjb', ''], ['be', ''], ['ss1', ''], ['ss2', ''], ['bp', '']],
    [['bs', 'mask']],
    [['datecode-pbd', '']],
    [['bo', 'silk']],
    [['szdrl', 'drill'], ['drl', 'drill'], ['rout', 'rout']],
    [['ydkdrl', ''], ['dkst', ''], ['dksb', ''], ['dd', ''], ['11silk_reftop', ''], ['auto_chk_pnl', ''],
     ['biaozhu', ''], ['fzkdrl', ''], ['dwk', ''], ['szdwk', ''], ['dwkby', ''], ['d', '']]
];

document.getElementById('layers').innerHTML = groups.map(group => `
    <div class="layer-group">${group.map(([name, type, swatch]) => `
        <label class="layer">
            <input type="checkbox"${name === 'cs1' ? ' checked' : ''}>
            <span class="${swatch || ''}"></span>
            <span class="layer-name ${type}">${name}${name === 'cs1' ? '<small>⊞</small>' : ''}</span>
        </label>`).join('')}
    </div>`).join('');

const GREEN = '#469600';
const BLUE = '#0020ff';
const MAGENTA = '#ff20ff';
const PAD = '#bab4ff';
const OUTLINE = '#0a20c8';

const rect = (x, y, w, h, fill) => `<rect x="${x}" y="${y}" width="${w}" height="${h}" fill="${fill}"/>`;
const dot = (x, y, r, fill) => `<circle cx="${x}" cy="${y}" r="${r}" fill="${fill}"/>`;
const line = (d, color, width) => `<path d="${d}" fill="none" stroke="${color}" stroke-width="${width}"/>`;

// ---- popview: edge connector close-up, 3 units per pixel ----
function connectorPads(start, count) {
    let s = '';
    for (let i = 0; i < count; i++) {
        const x = Math.round((start + i * 42.2) / 3) * 3;
        s += `<path fill="${PAD}" d="M${x} 660h30v168l-9 6v56h-12v-56l-9-6zM${x + 9} 1005h12v60l9 9v162h-30v-162l9-9z"/>`;
        s += rect(x + 9, 891, 12, 33, GREEN) + rect(x + 9, 975, 12, 30, GREEN);
    }
    return s;
}

function fanoutStart(o) {
    let s = '';
    [[262, 175], [286, 205], [325, 247], [421, 150], [427, 457], [397, 535], [370, 565], [397, 580], [346, 607], [370, 637],
     [312, 645], [310, 1255], [370, 1261], [346, 1291], [397, 1318], [370, 1333]].forEach(([x, y]) => { s += dot(x + o, y, 12, GREEN); });
    s += line(`M${o + 397} 580l21 21v58M${o + 375} 637v22M${o + 418} 1240v105l-18 18M${o + 334} 1240v45l12 8M${o + 385} 1238l10 12v34l-25 28v20`, GREEN, 9);
    s += line(`M${o + 406} 132l14 16M${o + 312} 645h8l26 20`, GREEN, 22);
    return s;
}

function fanoutUnit(x, k) {
    const slant = k < 3 ? 20 : 55;
    let s = '';
    [[0, 598], [0, 642], [33, 571], [66, 547], [0, 1255], [0, 1300], [33, 1327], [66, 1351]]
        .forEach(([dx, dy]) => { s += dot(x + dx, dy, 12, GREEN); });
    s += line(`M${x} 598l42 42v20M${x + 66} 547l18 20v93M${x} 642v18M${x} 1238v17`, GREEN, 9);
    s += line(`M${x + 42} 1240v75l-9 12M${x + 84} 1240v68l${slant} ${slant === 20 ? 22 : 54}v30`, GREEN, 9);
    return s;
}

function drawPopview() {
    let s = '';
    // board outline and ground copper
    s += rect(111, 132, 33, 368, GREEN) + rect(1632, 132, 42, 368, GREEN) + rect(1854, 132, 30, 368, GREEN);
    s += line('M48 159H102M102 132V325M1684 132V325M1842 132V325M1684 159H1842', BLUE, 12);
    s += dot(102, 140, 18, BLUE) + dot(1684, 140, 18, BLUE) + dot(1842, 140, 18, BLUE);
    s += dot(252, 538, 20, BLUE) + dot(1640, 538, 20, BLUE) + dot(1992, 538, 20, BLUE);
    s += dot(252, 1360, 20, BLUE) + dot(1640, 1360, 20, BLUE) + dot(1992, 1360, 20, BLUE);

    [[646, 220], [751, 211], [952, 220], [1294, 214], [1300, 166], [1450, 223], [1450, 262], [1606, 145],
     [1519, 625], [1558, 604], [1474, 642], [1474, 1255], [1519, 1273], [1558, 1294]]
        .forEach(([x, y]) => { s += dot(x, y, 12, GREEN); });
    s += rect(1293, 132, 18, 36, GREEN) + rect(1549, 604, 18, 56, GREEN);
    s += line('M1519 1273h20l24-24v-14', GREEN, 18);

    s += fanoutStart(0) + fanoutStart(1740);
    for (let k = 0; k < 8; k++) s += fanoutUnit(Math.round(461 + k * 126.7), k);
    s += fanoutUnit(2203, 0);

    // outline of the mask opening
    const necks = 'M102 321V485Q104 510 128 510H270Q278 510 278 520V670'
        + 'M1684 321V485Q1682 510 1658 510H1620Q1611 510 1611 520V670'
        + 'M1842 321V485Q1844 510 1868 510H2010Q2018 510 2018 520V670'
        + 'M278 1230V1370M1611 1230V1370M2018 1230V1370';
    s += line(necks, '#f00', 36);
    s += line('M115 321V485Q118 498 144 498M1671 321V485Q1668 498 1640 498M1855 321V485Q1858 498 1884 498', '#c88c14', 8);
    s += rect(48, 651, 2175, 246, '#f00') + rect(48, 998, 2175, 247, '#f00');
    s += rect(48, 660, 2175, 231, MAGENTA) + rect(48, 1004, 2175, 232, MAGENTA);
    s += line(necks, MAGENTA, 14);
    s += connectorPads(318, 30) + connectorPads(2058, 4);
    s += line('M48 894H2223M48 1001H2223', '#b00a20', 6).replace('/>', ' opacity=".6"/>');
    document.getElementById('popCanvas').innerHTML = s;
}

// ---- main view: the 2 x 3 array ----
let seed = 11;
function rnd(n) {
    seed = (seed * 16807) % 2147483647;
    return seed % n;
}

function speckle(x, y, w, h, count, color, sizes) {
    let d = '';
    for (let i = 0; i < count; i++) {
        const [sw, sh] = sizes[rnd(sizes.length)];
        const px = x + rnd(Math.floor((w - sw) / 3) + 1) * 3;
        const py = y + rnd(Math.floor((h - sh) / 3) + 1) * 3;
        d += `M${px} ${py}h${sw}v${sh}h${-sw}z`;
    }
    return `<path fill="${color}" d="${d}"/>`;
}

// packed copper blocks, split by dark gaps
function routing(x, y, w, h) {
    let s = rect(x, y, w, h, '#44a6fc');
    let d = '';
    for (let py = 0; py < h; py += 9) {
        for (let px = rnd(2) * 3; px < w - 3; px += 9) {
            const kind = rnd(9);
            if (kind < 4) d += `M${x + px} ${y + py}h3v${Math.min(12, h - py)}h-3z`;
            else if (kind < 8) d += `M${x + px} ${y + py}h${Math.min(12, w - px)}v3h${-Math.min(12, w - px)}z`;
            else d += `M${x + px} ${y + py}h6v6h-6z`;
        }
    }
    s += `<path fill="#04122c" d="${d}"/>`;
    s += speckle(x, y, w, h, 45, '#0a50d8', [[6, 3], [3, 6]]);
    s += speckle(x, y, w, h, 40, '#04122c', [[6, 3], [3, 6]]);
    s += speckle(x, y, w, h, 16, GREEN, [[3, 6], [3, 3]]);
    return s;
}

function boardCell(x, y) {
    let s = `<rect x="${x}" y="${y}" width="174" height="543" fill="none" stroke="${OUTLINE}" stroke-width="3"/>`;
    [[36, 21], [140, 21], [36, 522], [140, 522]].forEach(([dx, dy]) => { s += dot(x + dx, y + dy, 11, BLUE); });
    s += rect(x + 2, y + 35, 171, 108, GREEN);
    s += speckle(x + 6, y + 42, 162, 80, 22, '#000', [[3, 6], [6, 3], [3, 3]]);
    s += line(`M${x + 6} ${y + 127}h162`, '#000', 3).replace('/>', ' stroke-dasharray="3 6"/>');
    s += `<path d="M${x + 2} ${y + 150}q0-22 16-22 14 0 20 16h96q6-16 20-16 10 0 10 20v90h-162z"/>`;
    s += line(`M${x + 38} ${y + 144}h96`, '#2468a8', 3);
    s += speckle(x + 30, y + 146, 120, 66, 36, GREEN, [[3, 6], [6, 3], [6, 6]]);
    s += speckle(x + 8, y + 150, 34, 32, 16, '#44a6fc', [[6, 12], [6, 6], [3, 12]]);
    s += speckle(x + 128, y + 150, 34, 32, 16, '#44a6fc', [[6, 12], [6, 6], [3, 12]]);
    s += speckle(x + 18, y + 118, 6, 12, 2, '#44a6fc', [[6, 9]]);
    s += speckle(x + 150, y + 118, 9, 12, 2, '#44a6fc', [[6, 9]]);
    s += speckle(x + 20, y + 222, 146, 15, 70, GREEN, [[3, 9], [6, 3]]);
    s += rect(x + 12, y + 309, 152, 18, '#3a6c00') + speckle(x + 4, y + 309, 160, 18, 60, '#000', [[3, 6], [6, 3]]);
    s += rect(x + 4, y + 328, 168, 180, GREEN);
    s += routing(x + 6, y + 328, 165, 81) + routing(x + 6, y + 422, 165, 81);
    s += line(`M${x + 2} ${y + 143}v365M${x + 172} ${y + 143}v365`, '#3a7c10', 3).replace('/>', ' stroke-dasharray="6 3"/>');
    return s;
}

function connectorRow(y, right, rim) {
    let s = rect(93, y, right - 93, 75, '#000');
    s += rect(93, y, right - 93, 27, '#f00') + rect(93, y + 43, right - 93, 32, '#f00');
    s += rect(99, y + 2, right - 105, 24, MAGENTA) + rect(99, y + 43, right - 105, 26, MAGENTA);
    [130, 321, 513].forEach((x, i) => {
        const w = i === 2 ? 138 : 141;
        s += rect(x, y, w, 27, PAD) + rect(x, y + 43, w, 26, PAD);
        s += rect(x, y + 69, w, 6, rim);
        s += line(`M${x} ${y + 29}h${w}M${x} ${y + 41}h${w}`, '#4c6c20', 4).replace('/>', ' stroke-dasharray="3 3"/>');
    });
    [106, 298, 490].forEach(x => {
        s += line(`M${x + 2} ${y - 36}v18h15v22M${x + 172} ${y - 36}v18h-5v22M${x + 2} ${y + 104}v-14h15v-18M${x + 172} ${y + 104}v-14h-5v-18`, '#d82890', 5);
    });
    return s;
}

function drawBoard() {
    let s = '<g transform="translate(830 410) scale(.33333)">';
    s += line('M55 1162V64Q58 53 70 53H88V1162ZM680 700V1162H704Q716 1160 716 1148V700M88 615H664M88 598H664M184 598v17M202 598v17M376 598v17M394 598v17', OUTLINE, 3);
    [73, 697].forEach(x => {
        s += dot(x, 1104, 9, BLUE) + dot(x, 1132, 9, BLUE) + dot(x, 1104, 3, '#44a6fc');
    });
    s += dot(73, 81, 9, BLUE) + dot(73, 111, 9, BLUE) + dot(73, 111, 3, '#44a6fc');
    [0, 562].forEach(oy => {
        [88, 280, 472, 664].forEach(x => {
            if (oy === 0 && x === 664) return;
            [133, 223, 415, 505].forEach(y => { s += line(`M${x} ${y + oy}h18M${x} ${y + oy + 15}h18`, OUTLINE, 3); });
        });
        [106, 298, 490].forEach(x => { s += boardCell(x, 55 + oy); });
        s += connectorRow(291 + oy, 677, oy ? GREEN : '#b88a10');
    });
    s += '</g>';
    // zoom area and its guide lines
    s += line('M867.5 676.500H939.500V721.500H867.500Z', '#e8e8d8', 1);
    s += line('M867 676L1004 236M925 676L1004 615M939 676L1004 638M939 722L1467 645', '#dcdcdc', 1);
    // origin marker
    s += '<circle cx="848" cy="797" r="7" fill="none" stroke="#fff"/>';
    s += line('M838 797H858M848 787V808M841 790L855 804M855 790L841 804', '#fff', 1);
    document.getElementById('board').innerHTML = s;
}

drawPopview();
drawBoard();
```
